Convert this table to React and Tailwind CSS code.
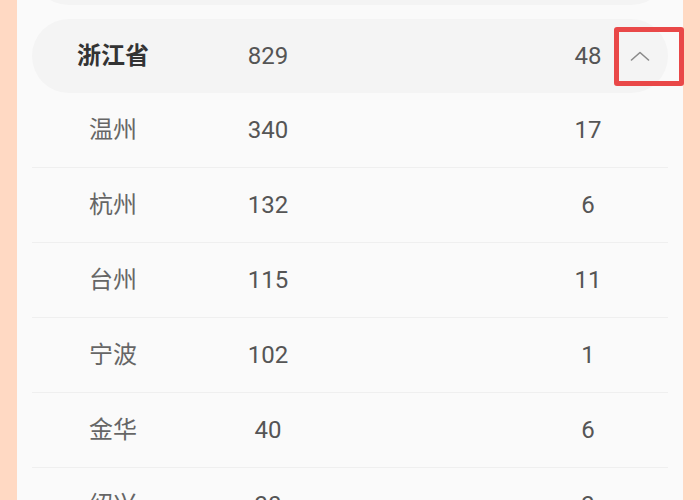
import React from 'react';

const FONT = { fontFamily: 'Roboto, "Noto Sans CJK SC", sans-serif' };

const cities = [
  { name: '温州', total: 340, count: 17 },
  { name: '杭州', total: 132, count: 6 },
  { name: '台州', total: 115, count: 11 },
  { name: '宁波', total: 102, count: 1 },
  { name: '金华', total: 40, count: 6 },
  { name: '绍兴', total: 30, count: 3 },
];

const ChevronUp = () => (
  <svg width="20" height="10" viewBox="0 0 20 10" fill="none">
    <path d="M1.5 9 L10 1.5 L18.5 9" stroke="#8a8a8a" strokeWidth="1.6" strokeLinecap="round" strokeLinejoin="round" />
  </svg>
);

const Cells = ({ name, total, count, bold }) => (
  <>
    <div className={`w-[162px] text-center ${bold ? 'font-bold text-[#333]' : 'text-[#666]'}`}>{name}</div>
    <div className="w-[148px] text-center text-[#555]">{total}</div>
    <div className="flex-1" />
    <div className="w-[60px] text-center text-[#555]">{count}</div>
  </>
);

export default function App() {
  return (
    <div className="w-[700px] h-[500px] overflow-hidden bg-[#ffd9c3] px-[17px] text-[24px]" style={FONT}>
      <div className="w-[666px] h-full flex flex-col bg-[#fafafa] pl-[15px] pr-[15px]">
        {/* previous province row (cut off at top) */}
        <div className="shrink-0 h-[74px] -mt-[69px] rounded-full bg-[#f4f4f4]" />

        {/* expanded province row */}
        <div className="relative shrink-0 mt-[14px] h-[74px] rounded-full bg-[#f4f4f4] flex items-center pr-[8px]">
          <Cells name="浙江省" total={829} count={48} bold />
          <div className="w-[2px]" />
          <div className="w-[40px] flex justify-center">
            <ChevronUp />
          </div>
          <div className="absolute left-[582px] top-[8px] w-[70px] h-[59px] border-[5px] border-[#e94848] rounded-[3px]" />
        </div>

        {/* city rows */}
        {cities.map((c) => (
          <div key={c.name} className="shrink-0 h-[75px] border-b border-[#efefef] flex items-center pr-[50px]">
            <Cells {...c} />
          </div>
        ))}
      </div>
    </div>
  );
}
